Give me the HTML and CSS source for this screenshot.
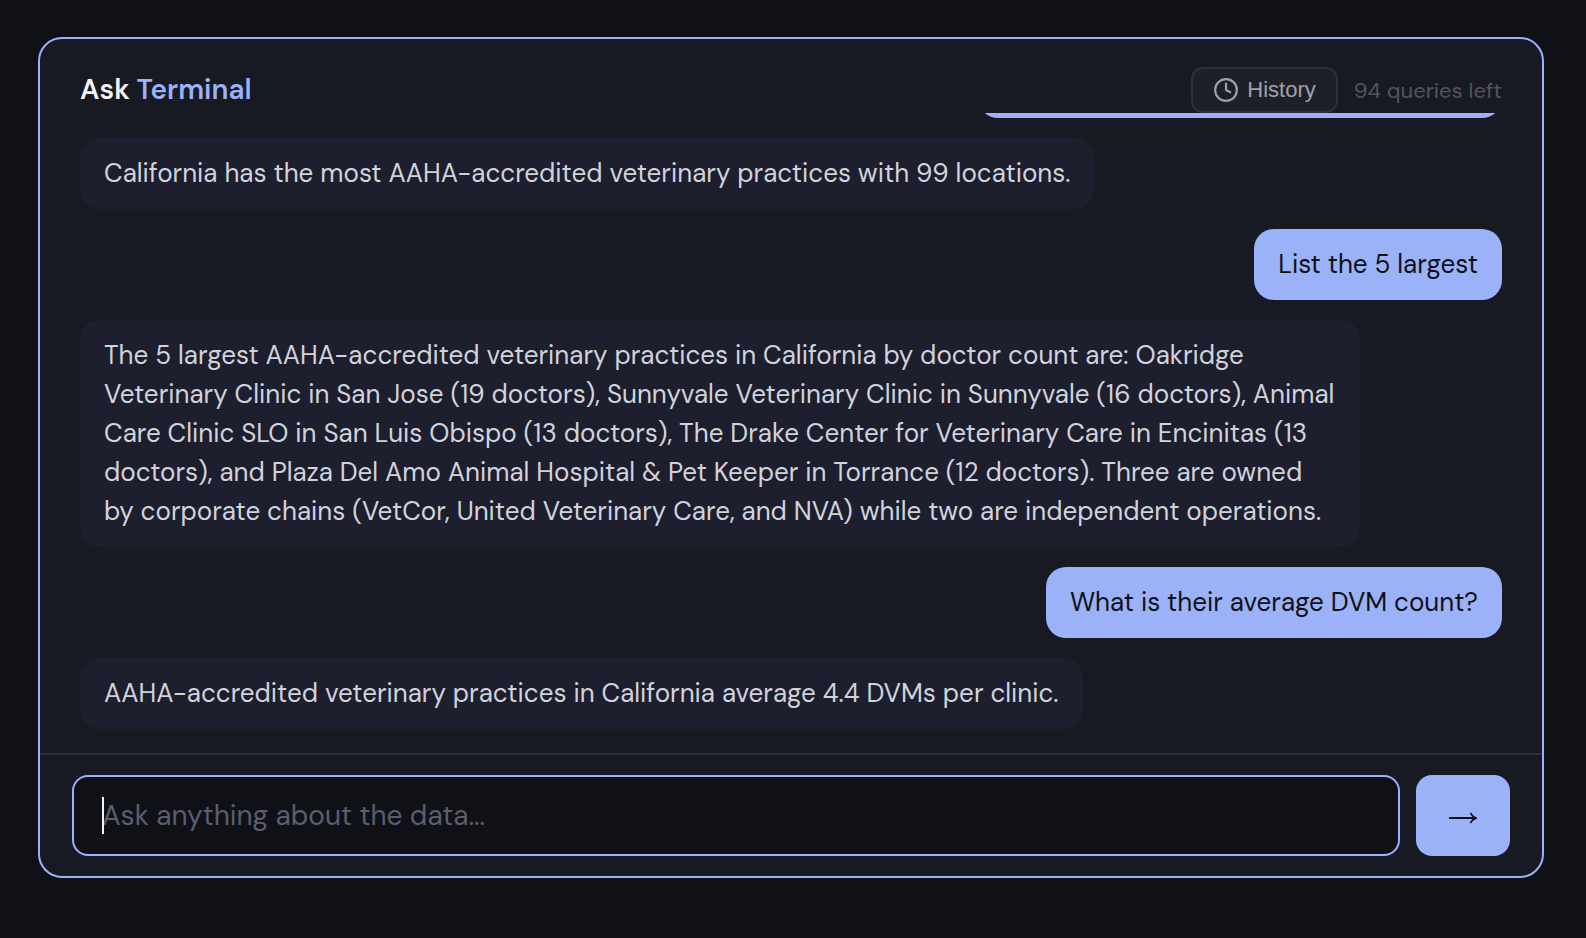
FILE: index.html
```html
<!DOCTYPE html>
<html lang="en">
<head>
    <meta charset="UTF-8">
    <meta name="viewport" content="width=device-width, initial-scale=1.0">
    <title>Ask Terminal</title>
    <link rel="stylesheet" href="styles.css">
</head>
<body>
    <main class="terminal">
        <header class="terminal-header">
            <h1>Ask <span>Terminal</span></h1>
            <div class="header-actions">
                <button class="history-button" type="button">
                    <svg viewBox="0 0 24 24" fill="none" stroke="currentColor" stroke-width="2" stroke-linecap="round" stroke-linejoin="round">
                        <circle cx="12" cy="12" r="10"/>
                        <path d="M12 6v6l4 2"/>
                    </svg>
                    History
                </button>
                <span class="queries-left">94 queries left</span>
            </div>
        </header>

        <!-- scrolled to the latest message -->
        <div class="messages">
            <div class="message user scrolled"></div>
            <div class="message bot">California has the most AAHA-accredited veterinary practices with 99 locations.</div>
            <div class="message user">List the 5 largest</div>
            <div class="message bot">The 5 largest AAHA-accredited veterinary practices in California by doctor count are: Oakridge Veterinary Clinic in San Jose (19 doctors), Sunnyvale Veterinary Clinic in Sunnyvale (16 doctors), Animal Care Clinic SLO in San Luis Obispo (13 doctors), The Drake Center for Veterinary Care in Encinitas (13 doctors), and Plaza Del Amo Animal Hospital &amp; Pet Keeper in Torrance (12 doctors). Three are owned by corporate chains (VetCor, United Veterinary Care, and NVA) while two are independent operations.</div>
            <div class="message user">What is their average DVM count?</div>
            <div class="message bot">AAHA-accredited veterinary practices in California average 4.4 DVMs per clinic.</div>
        </div>

        <form class="ask-form">
            <label class="ask-field">
                <input type="text" placeholder="Ask anything about the data..." aria-label="Ask anything about the data" autocomplete="off">
            </label>
            <button class="send-button" type="submit" aria-label="Send">
                <svg viewBox="0 0 28 12">
                    <path d="M0 5.100h23.500L20.600 1.400 22 .4Q24 4 28 5.600v.8Q24 8 22 11.600l-1.400-1L23.500 6.900H0z" fill="currentColor"/>
                </svg>
            </button>
        </form>
    </main>

    <script>
        document.querySelector('.ask-form').addEventListener('submit', e => e.preventDefault());
    </script>
</body>
</html>
```
FILE: styles.css
```css
* {
    box-sizing: border-box;
}

body {
    margin: 0;
    height: 100vh;
    padding: 37px 42px 60px 38px;
    display: flex;
    background: #101116;
    color: #d1d3dc;
    font-family: 'DM Sans', 'Open Sans', sans-serif;
}

.terminal {
    flex: 1;
    min-width: 0;
    display: flex;
    flex-direction: column;
    background: #171a22;
    border: 2px solid #9bb2f9;
    border-radius: 24px;
    overflow: hidden;
}

.terminal-header {
    display: flex;
    align-items: center;
    justify-content: space-between;
    padding: 28px 40px 0;
}

.terminal-header h1 {
    margin: 0;
    font-size: 28px;
    font-weight: 600;
    line-height: 38px;
    color: #f4f4f6;
}

.terminal-header h1 span {
    color: #9bb2f9;
}

.header-actions {
    display: flex;
    align-items: center;
    gap: 16px;
}

.history-button {
    display: flex;
    align-items: center;
    gap: 8px;
    padding: 8px 20px;
    background: #1e2028;
    border: 2px solid #2d2d44;
    border-radius: 12px;
    color: #9fa2ae;
    font-family: 'Liberation Sans', Arial, sans-serif;
    font-size: 22px;
    line-height: 26px;
    cursor: pointer;
}

.history-button svg {
    width: 26px;
    height: 26px;
}

.queries-left {
    font-size: 22px;
    color: #555555;
}

.messages {
    flex: 1;
    min-height: 0;
    display: flex;
    flex-direction: column;
    justify-content: flex-end;
    gap: 20px;
    padding: 0 40px 24px;
    overflow: hidden;
}

.message {
    flex-shrink: 0;
    max-width: 90%;
    padding: 16px 24px;
    border-radius: 20px;
    font-size: 26px;
    line-height: 39px;
}

.message.bot {
    align-self: flex-start;
    background: #1e1f2e;
}

.message.user {
    align-self: flex-end;
    background: #9bb2f9;
    color: #101116;
}

.message.scrolled {
    width: 524px;
    height: 71px;
}

.ask-form {
    display: flex;
    gap: 16px;
    padding: 20px 32px;
    border-top: 2px solid #2d2d44;
}

.ask-field {
    position: relative;
    flex: 1;
    display: flex;
}

/* text cursor */
.ask-field::before {
    content: '';
    position: absolute;
    top: 22px;
    left: 30px;
    width: 2px;
    height: 37px;
    background: #f4f4f6;
}

.ask-field input {
    width: 100%;
    height: 81px;
    padding: 0 28px;
    background: #101116;
    border: 2px solid #9bb2f9;
    border-radius: 16px;
    outline: none;
    color: #f4f4f6;
    caret-color: transparent;
    font-family: inherit;
    font-size: 28px;
}

.ask-field input::placeholder {
    color: #5a5e6e;
    opacity: 1;
}

.send-button {
    display: flex;
    align-items: center;
    justify-content: center;
    width: 94px;
    padding: 4px 0 0;
    background: #9bb2f9;
    border: none;
    border-radius: 16px;
    color: #101116;
    cursor: pointer;
}

.send-button svg {
    width: 28px;
    height: 12px;
}
```
